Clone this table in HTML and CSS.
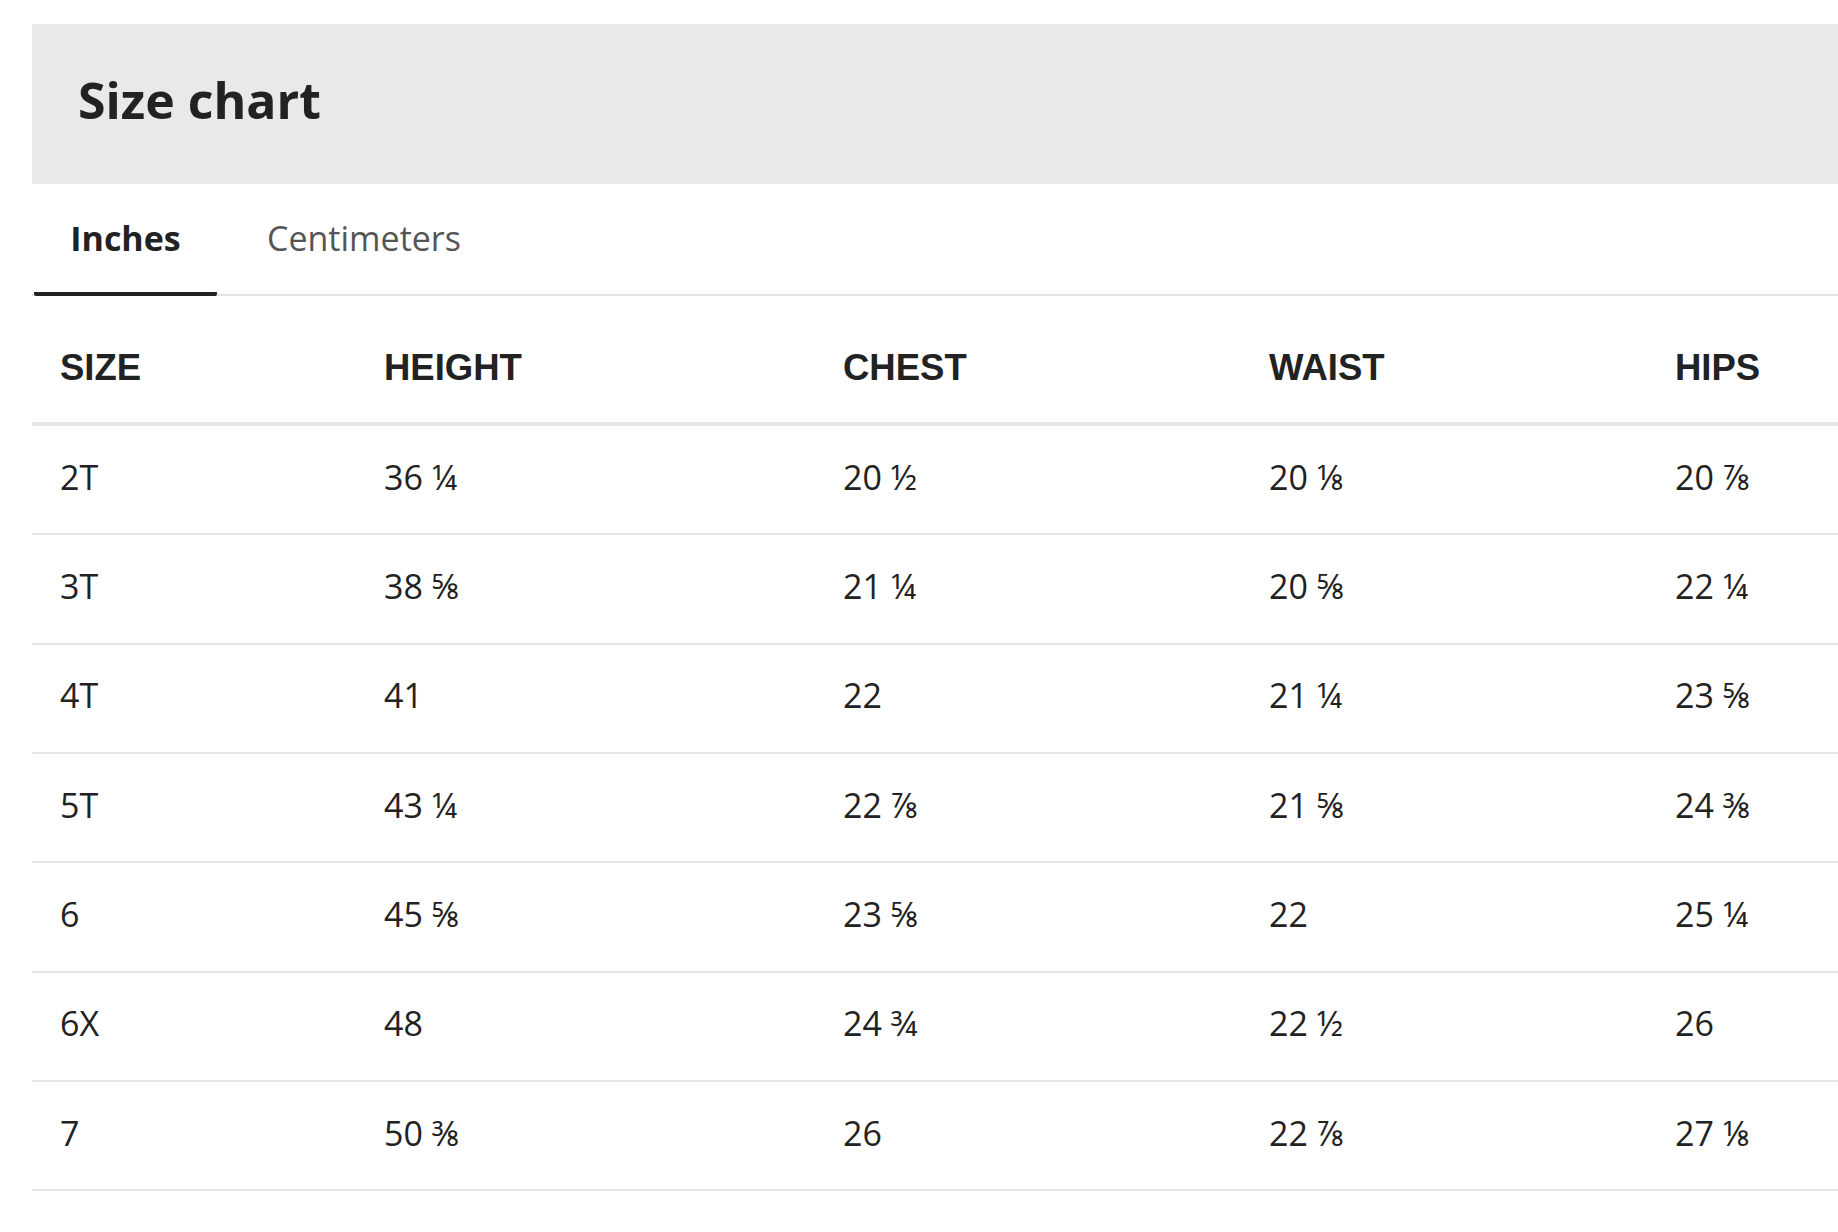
FILE: index.html
```html
<!DOCTYPE html>
<html lang="en">
<head>
<meta charset="utf-8">
<title>Size chart</title>
<link rel="stylesheet" href="styles.css">
</head>
<body>
<div class="sheet">
  <header class="title-bar">
    <h1 class="title">Size chart</h1>
  </header>
  <nav class="tabs">
    <div class="tab tab-active">Inches</div>
    <div class="tab">Centimeters</div>
  </nav>
  <div class="table">
    <div class="row head">
      <div class="cell">SIZE</div><div class="cell">HEIGHT</div><div class="cell">CHEST</div><div class="cell">WAIST</div><div class="cell">HIPS</div>
    </div>
    <div class="row">
      <div class="cell">2T</div><div class="cell">36 ¼</div><div class="cell">20 ½</div><div class="cell">20 ⅛</div><div class="cell">20 ⅞</div>
    </div>
    <div class="row">
      <div class="cell">3T</div><div class="cell">38 ⅝</div><div class="cell">21 ¼</div><div class="cell">20 ⅝</div><div class="cell">22 ¼</div>
    </div>
    <div class="row">
      <div class="cell">4T</div><div class="cell">41</div><div class="cell">22</div><div class="cell">21 ¼</div><div class="cell">23 ⅝</div>
    </div>
    <div class="row">
      <div class="cell">5T</div><div class="cell">43 ¼</div><div class="cell">22 ⅞</div><div class="cell">21 ⅝</div><div class="cell">24 ⅜</div>
    </div>
    <div class="row">
      <div class="cell">6</div><div class="cell">45 ⅝</div><div class="cell">23 ⅝</div><div class="cell">22</div><div class="cell">25 ¼</div>
    </div>
    <div class="row">
      <div class="cell">6X</div><div class="cell">48</div><div class="cell">24 ¾</div><div class="cell">22 ½</div><div class="cell">26</div>
    </div>
    <div class="row">
      <div class="cell">7</div><div class="cell">50 ⅜</div><div class="cell">26</div><div class="cell">22 ⅞</div><div class="cell">27 ⅛</div>
    </div>
  </div>
</div>
</body>
</html>
```
FILE: styles.css
```css
*, *::before, *::after {
  box-sizing: border-box;
}

html, body {
  margin: 0;
  padding: 0;
  background: #ffffff;
  overflow: hidden;
}

body {
  font-family: "Open Sans", "Lato", "Noto Sans", sans-serif;
  color: #222222;
  font-variant-ligatures: none;
}

.sheet {
  padding: 24px 0 0 32px;
}

.title-bar {
  background: #e9e9e9;
  height: 160px;
  display: flex;
  align-items: center;
  padding: 0 0 8px 46px;
}

.title {
  margin: 0;
  font-size: 50px;
  font-weight: 700;
  line-height: 1;
  color: #222222;
}

.tabs {
  display: flex;
  height: 112px;
  border-bottom: 2px solid #e3e3e3;
}

.tab {
  display: flex;
  align-items: center;
  justify-content: center;
  font-size: 34px;
  color: #555555;
  margin-bottom: -2px;
  border-bottom: 4px solid transparent;
}

.tab-active {
  width: 183px;
  margin-left: 2px;
  font-weight: 700;
  color: #222222;
  border-bottom-color: #222222;
  border-radius: 0 0 2px 2px;
}

.tab + .tab {
  margin-left: 50px;
}

.table {
  display: flex;
  flex-direction: column;
}

.row {
  display: grid;
  grid-template-columns: 324px 459px 426px 406px 1fr;
  height: 109.33px;
  padding-bottom: 6px;
  border-bottom: 2px solid #e5e5e5;
  align-items: center;
  font-size: 34px;
}

.row.head {
  height: 130px;
  padding: 18px 0 0 0;
  border-bottom: 4px solid #e5e5e5;
  font-family: "Liberation Sans", Arial, sans-serif;
  font-weight: 700;
  font-size: 36.5px;
}

.cell {
  padding-left: 28px;
  white-space: nowrap;
}
```
